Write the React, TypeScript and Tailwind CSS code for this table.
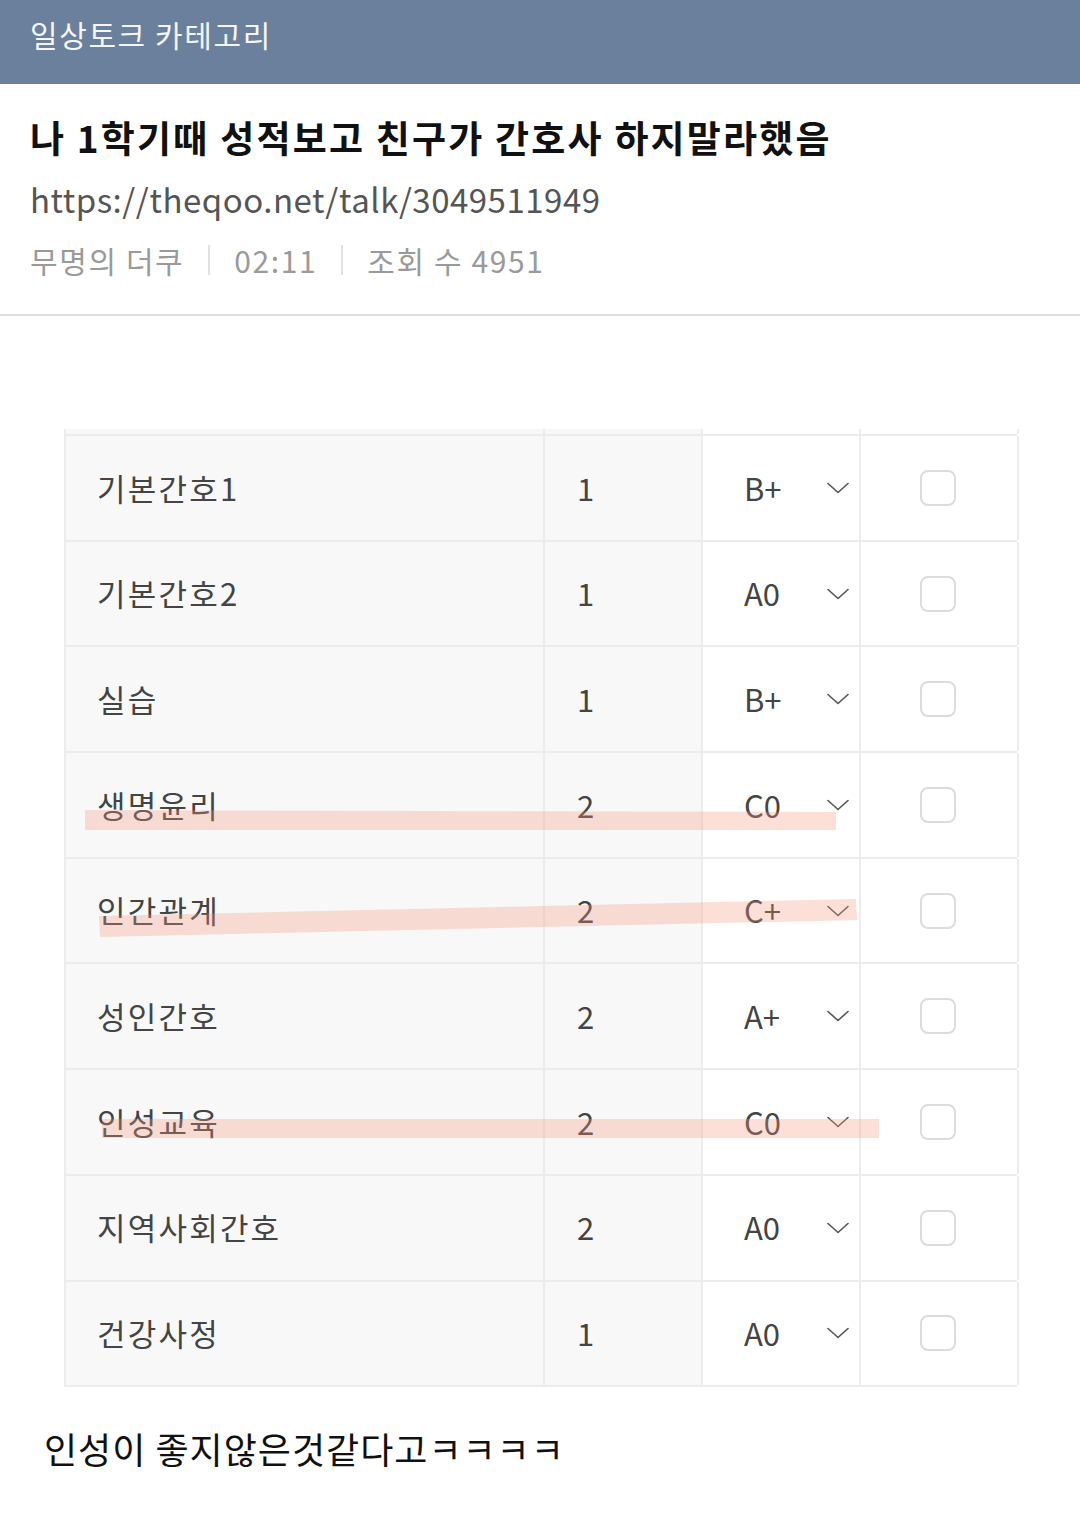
const rows = [
  { name: "기본간호1", credit: "1", grade: "B+" },
  { name: "기본간호2", credit: "1", grade: "A0" },
  { name: "실습", credit: "1", grade: "B+" },
  { name: "생명윤리", credit: "2", grade: "C0" },
  { name: "인간관계", credit: "2", grade: "C+" },
  { name: "성인간호", credit: "2", grade: "A+" },
  { name: "인성교육", credit: "2", grade: "C0" },
  { name: "지역사회간호", credit: "2", grade: "A0" },
  { name: "건강사정", credit: "1", grade: "A0" },
];

function Chevron() {
  return (
    <svg width="22" height="12" viewBox="0 0 22 12" fill="none" className="mr-[10px]">
      <polyline points="1,1.5 11,10.5 21,1.5" stroke="#555" strokeWidth="1.6" strokeLinejoin="round" strokeLinecap="round" />
    </svg>
  );
}

function GradeRow({ name, credit, grade }: { name: string; credit: string; grade: string }) {
  return (
    <div className="grid grid-cols-[479px_158px_158px_158px] h-[105.7px] border-b-2 border-[#ececec]">
      <div className="flex items-center pl-[31px] bg-[#f8f8f8] border-r-2 border-[#ececec] text-[31px] tracking-[2.2px] text-[#444]">
        {name}
      </div>
      <div className="flex items-center pl-[32px] bg-[#f8f8f8] border-r-2 border-[#ececec] text-[31px] text-[#444]">
        {credit}
      </div>
      <div className="flex items-center justify-between pl-[41px] border-r-2 border-[#ececec] text-[31px] text-[#444]">
        <span>{grade}</span>
        <Chevron />
      </div>
      <div className="flex items-center pl-[59px] border-r-2 border-[#ececec]">
        <div className="w-[36px] h-[36px] rounded-[8px] border-2 border-[#dcdcdc] bg-white" />
      </div>
    </div>
  );
}

export default function App() {
  return (
    <div className="w-[1080px] h-[1520px] bg-white font-['Noto_Sans_CJK_KR',sans-serif] overflow-hidden">
      <div className="h-[84px] bg-[#6b809d] pl-[30px] pt-[14px]">
        <div className="text-[30px] leading-[40px] tracking-[1.6px] text-[#f4f6f9]">일상토크 카테고리</div>
      </div>

      <div className="px-[30px] pt-[27px] pb-[29px] border-b-2 border-[#dedede]">
        <h1 className="text-[37px] leading-[52px] font-bold text-[#111] tracking-[2.2px] whitespace-nowrap">
          나 1학기때 성적보고 친구가 간호사 하지말라했음
        </h1>
        <div className="mt-[11px] text-[33px] leading-[50px] tracking-[0.5px] text-[#555]">https://theqoo.net/talk/3049511949</div>
        <div className="mt-[11px] flex items-center text-[30px] leading-[50px] tracking-[1.6px] text-[#9a9a9a]">
          <span>무명의 더쿠</span>
          <span className="mx-[24px] w-[2px] h-[30px] bg-[#e2e2e2]" />
          <span>02:11</span>
          <span className="mx-[24px] w-[2px] h-[30px] bg-[#e2e2e2]" />
          <span>조회 수 4951</span>
        </div>
      </div>

      <div className="relative ml-[64px] mt-[113px] w-[953px] border-l-2 border-[#ececec]">
        <div className="grid grid-cols-[479px_158px_158px_158px] h-[7px] border-b-2 border-[#ececec]">
          <div className="bg-[#f8f8f8] border-r-2 border-[#ececec]" />
          <div className="bg-[#f8f8f8] border-r-2 border-[#ececec]" />
          <div className="border-r-2 border-[#ececec]" />
          <div className="border-r-2 border-[#ececec]" />
        </div>
        {rows.map((r) => (
          <GradeRow key={r.name} {...r} />
        ))}

        {/* marker strokes */}
        <svg className="absolute left-0 top-0 pointer-events-none" width="953" height="960" viewBox="0 0 953 960">
          <polygon points="19,381 770,383 770,401 19,401" fill="rgba(244,150,122,0.3)" />
          <polygon points="33,487 790,470 791,491 34,508" fill="rgba(244,150,122,0.3)" />
          <polygon points="36,690 813,690 813,709 36,709" fill="rgba(244,150,122,0.3)" />
        </svg>
      </div>

      <div className="mt-[36px] pl-[44px] text-[36px] leading-[50px] tracking-[1px] text-[#111]">인성이 좋지않은것같다고ㅋㅋㅋㅋ</div>
    </div>
  );
}
